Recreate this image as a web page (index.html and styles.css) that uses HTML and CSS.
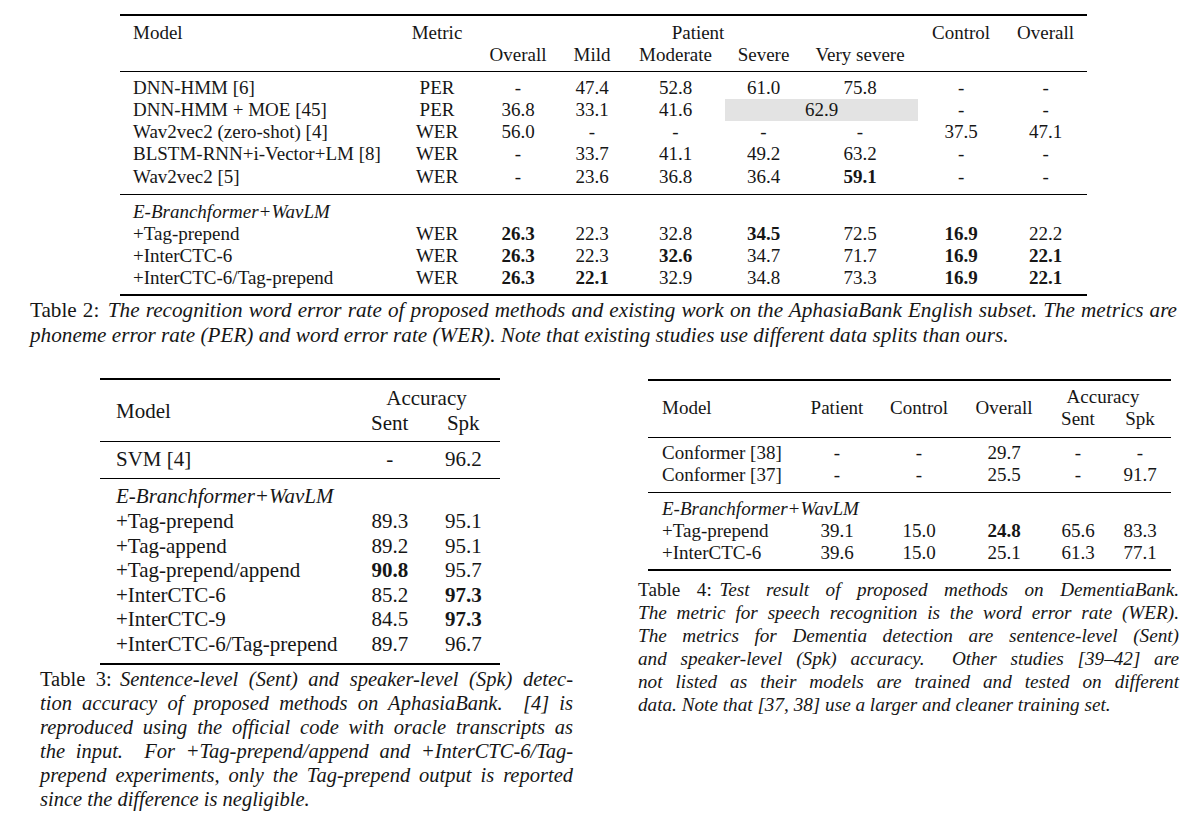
FILE: index.html
```html
<!doctype html>
<html lang="en">
<head>
	<meta charset="UTF-8">
	<title>Results tables</title>
	<link rel="stylesheet" href="styles.css">
</head>
<body>
	<div class="page">
		<div class="fig-wide">
			<table class="tbl t2">
				<colgroup>
					<col style="width:276px"><col style="width:82px"><col style="width:80px"><col style="width:68px"><col style="width:99px"><col style="width:77px"><col style="width:116px"><col style="width:86px"><col style="width:83px">
				</colgroup>
				<thead>
					<tr class="first">
						<th class="l">Model</th><th>Metric</th><th colspan="5" class="patient">Patient</th><th>Control</th><th>Overall</th>
					</tr>
					<tr class="last">
						<th></th><th></th><th>Overall</th><th>Mild</th><th>Moderate</th><th>Severe</th><th>Very severe</th><th></th><th></th>
					</tr>
				</thead>
				<tbody>
					<tr class="first"><td class="l">DNN-HMM [6]</td><td>PER</td><td>-</td><td>47.4</td><td>52.8</td><td>61.0</td><td>75.8</td><td>-</td><td>-</td></tr>
					<tr><td class="l">DNN-HMM + MOE [45]</td><td>PER</td><td>36.8</td><td>33.1</td><td>41.6</td><td colspan="2" class="shade">62.9</td><td>-</td><td>-</td></tr>
					<tr><td class="l">Wav2vec2 (zero-shot) [4]</td><td>WER</td><td>56.0</td><td>-</td><td>-</td><td>-</td><td>-</td><td>37.5</td><td>47.1</td></tr>
					<tr><td class="l">BLSTM-RNN+i-Vector+LM [8]</td><td>WER</td><td>-</td><td>33.7</td><td>41.1</td><td>49.2</td><td>63.2</td><td>-</td><td>-</td></tr>
					<tr class="last"><td class="l">Wav2vec2 [5]</td><td>WER</td><td>-</td><td>23.6</td><td>36.8</td><td>36.4</td><td><b>59.1</b></td><td>-</td><td>-</td></tr>
				</tbody>
				<tbody class="ours">
					<tr class="first"><td class="l"><i>E-Branchformer+WavLM</i></td><td></td><td></td><td></td><td></td><td></td><td></td><td></td><td></td></tr>
					<tr><td class="l">+Tag-prepend</td><td>WER</td><td><b>26.3</b></td><td>22.3</td><td>32.8</td><td><b>34.5</b></td><td>72.5</td><td><b>16.9</b></td><td>22.2</td></tr>
					<tr><td class="l">+InterCTC-6</td><td>WER</td><td><b>26.3</b></td><td>22.3</td><td><b>32.6</b></td><td>34.7</td><td>71.7</td><td><b>16.9</b></td><td><b>22.1</b></td></tr>
					<tr class="last"><td class="l">+InterCTC-6/Tag-prepend</td><td>WER</td><td><b>26.3</b></td><td><b>22.1</b></td><td>32.9</td><td>34.8</td><td>73.3</td><td><b>16.9</b></td><td><b>22.1</b></td></tr>
				</tbody>
			</table>
			<div class="caption cap2">
				<span class="ln"><span class="lab">Table 2:</span><i>The recognition word error rate of proposed methods and existing work on the AphasiaBank English subset. The metrics are</i></span>
				<span class="ln end"><i>phoneme error rate (PER) and word error rate (WER). Note that existing studies use different data splits than ours.</i></span>
			</div>
		</div>

		<div class="fig-row">
			<div class="col col-left">
				<table class="tbl t3">
					<colgroup>
						<col style="width:253px"><col style="width:73.5px"><col style="width:73.5px">
					</colgroup>
					<thead>
						<tr class="first"><th class="l model" rowspan="2">Model</th><th colspan="2">Accuracy</th></tr>
						<tr class="last"><th>Sent</th><th>Spk</th></tr>
					</thead>
					<tbody>
						<tr class="first last"><td class="l">SVM [4]</td><td>-</td><td>96.2</td></tr>
					</tbody>
					<tbody class="ours">
						<tr class="first"><td class="l"><i>E-Branchformer+WavLM</i></td><td></td><td></td></tr>
						<tr><td class="l">+Tag-prepend</td><td>89.3</td><td>95.1</td></tr>
						<tr><td class="l">+Tag-append</td><td>89.2</td><td>95.1</td></tr>
						<tr><td class="l">+Tag-prepend/append</td><td><b>90.8</b></td><td>95.7</td></tr>
						<tr><td class="l">+InterCTC-6</td><td>85.2</td><td><b>97.3</b></td></tr>
						<tr><td class="l">+InterCTC-9</td><td>84.5</td><td><b>97.3</b></td></tr>
						<tr class="last"><td class="l">+InterCTC-6/Tag-prepend</td><td>89.7</td><td>96.7</td></tr>
					</tbody>
				</table>
				<div class="caption cap3">
					<span class="ln"><span class="lab">Table 3:</span><i>Sentence-level (Sent) and speaker-level (Spk) detec-</i></span>
					<span class="ln"><i>tion accuracy of proposed methods on AphasiaBank. &nbsp;[4] is</i></span>
					<span class="ln"><i>reproduced using the official code with oracle transcripts as</i></span>
					<span class="ln"><i>the input. &nbsp;For +Tag-prepend/append and +InterCTC-6/Tag-</i></span>
					<span class="ln"><i>prepend experiments, only the Tag-prepend output is reported</i></span>
					<span class="ln end"><i>since the difference is negligible.</i></span>
				</div>
			</div>

			<div class="col col-right">
				<table class="tbl t4">
					<colgroup>
						<col style="width:149px"><col style="width:80px"><col style="width:84px"><col style="width:86px"><col style="width:62px"><col style="width:62px">
					</colgroup>
					<thead>
						<tr class="first"><th class="l" rowspan="2">Model</th><th rowspan="2">Patient</th><th rowspan="2">Control</th><th rowspan="2">Overall</th><th colspan="2" class="acc">Accuracy</th></tr>
						<tr class="last"><th>Sent</th><th>Spk</th></tr>
					</thead>
					<tbody>
						<tr class="first"><td class="l">Conformer [38]</td><td>-</td><td>-</td><td>29.7</td><td>-</td><td>-</td></tr>
						<tr class="last"><td class="l">Conformer [37]</td><td>-</td><td>-</td><td>25.5</td><td>-</td><td>91.7</td></tr>
					</tbody>
					<tbody class="ours">
						<tr class="first"><td class="l" colspan="3"><i>E-Branchformer+WavLM</i></td><td></td><td></td><td></td></tr>
						<tr><td class="l">+Tag-prepend</td><td>39.1</td><td>15.0</td><td><b>24.8</b></td><td>65.6</td><td>83.3</td></tr>
						<tr class="last"><td class="l">+InterCTC-6</td><td>39.6</td><td>15.0</td><td>25.1</td><td>61.3</td><td>77.1</td></tr>
					</tbody>
				</table>
				<div class="caption cap4">
					<span class="ln"><span class="lab">Table 4:</span><i>Test result of proposed methods on DementiaBank.</i></span>
					<span class="ln"><i>The metric for speech recognition is the word error rate (WER).</i></span>
					<span class="ln"><i>The metrics for Dementia detection are sentence-level (Sent)</i></span>
					<span class="ln"><i>and speaker-level (Spk) accuracy. &nbsp;Other studies [39–42] are</i></span>
					<span class="ln"><i>not listed as their models are trained and tested on different</i></span>
					<span class="ln end"><i>data. Note that [37, 38] use a larger and cleaner training set.</i></span>
				</div>
			</div>
		</div>
	</div>
</body>
</html>
```

FILE: styles.css
```css
*{
	margin:0;
	padding:0;
	box-sizing:border-box;
}
html, body{
	background:#fff;
}
body{
	font-family:"Liberation Serif", "Times New Roman", serif;
	color:#161616;
}
.page{
	width:1200px;
}

/* tables: booktabs-like rules */
.tbl{
	border-collapse:separate;
	border-spacing:0;
	table-layout:fixed;
}
.tbl th, .tbl td{
	font-weight:normal;
	text-align:center;
	white-space:nowrap;
	padding:0;
	vertical-align:middle;
}
.tbl b{
	font-weight:bold;
}
.tbl .l{
	text-align:left;
}
.tbl thead tr.first th{
	border-top:2px solid #000;
}
.tbl tbody tr.first td{
	border-top:1px solid #000;
}
.tbl tbody.ours tr.last td{
	border-bottom:2px solid #000;
}

/* table 2 */
.fig-wide{
	padding-top:14px;
}
.t2{
	width:967px;
	margin-left:120px;
	font-size:19px;
	line-height:22.3px;
}
.t2 .l{
	padding-left:13px;
}
.t2 thead tr.first th{
	padding-top:6px;
}
.t2 thead tr.last th{
	padding-bottom:4px;
}
.t2 .patient{
	padding-left:0;
}
.t2 tbody tr.first td{
	padding-top:5px;
}
.t2 tbody tr.last td{
	padding-bottom:5.5px;
}
.t2 tbody.ours td{
	line-height:22px;
}
.t2 tbody.ours tr.first td{
	padding-top:6px;
}
.t2 tbody.ours tr.last td{
	padding-bottom:5px;
}
.t2 .shade{
	background:#e3e3e3;
}

/* captions */
.caption{
	font-style:normal;
}
.caption i{
	font-style:italic;
}
.caption .ln{
	display:block;
	text-align:justify;
	text-align-last:justify;
}
.caption .ln.end{
	text-align-last:left;
}
.caption .lab{
	margin-right:0.4em;
}
.cap2{
	width:1147px;
	margin:2px 0 0 30px;
	font-size:21.2px;
	line-height:25px;
}

/* lower row */
.fig-row{
	display:flex;
	align-items:flex-start;
	margin-top:30px;
	padding-left:40px;
}
.col-left{
	width:533px;
}
.col-right{
	width:541px;
	margin-left:65px;
}

/* table 3 */
.t3{
	width:400px;
	margin-left:60px;
	font-size:21px;
	line-height:24.6px;
}
.t3 .l{
	padding-left:16px;
}
.t3 thead tr.first th{
	padding-top:6.7px;
}
.t3 thead tr.last th{
	padding-bottom:6px;
}
.t3 thead th.model{
	padding-top:6.7px;
	padding-bottom:6px;
}
.t3 tbody tr.first td{
	padding-top:4.8px;
}
.t3 tbody tr.last td{
	padding-bottom:6px;
}
.t3 tbody.ours tr.first td{
	padding-top:5.5px;
}
.cap3{
	width:533px;
	margin-top:2.5px;
	font-size:20.5px;
	line-height:24px;
}

/* table 4 */
.t4{
	width:523px;
	margin:1.5px 0 0 10px;
	font-size:19px;
	line-height:22px;
}
.t4 .l{
	padding-left:14px;
}
.t4 thead tr.first th{
	padding-top:5px;
}
.t4 thead tr.last th{
	padding-bottom:6.5px;
}
.t4 thead th[rowspan]{
	padding-top:5px;
	padding-bottom:6.5px;
}
.t4 .acc{
	padding-right:12px;
}
.t4 tbody tr.first td{
	padding-top:4.5px;
}
.t4 tbody tr.last td{
	padding-bottom:5.5px;
}
.t4 tbody.ours tr.first td{
	padding-top:5.5px;
}
.t4 tbody.ours tr.last td{
	padding-bottom:5px;
}
.cap4{
	width:541px;
	margin-top:6.5px;
	font-size:19.2px;
	line-height:23px;
}
```
